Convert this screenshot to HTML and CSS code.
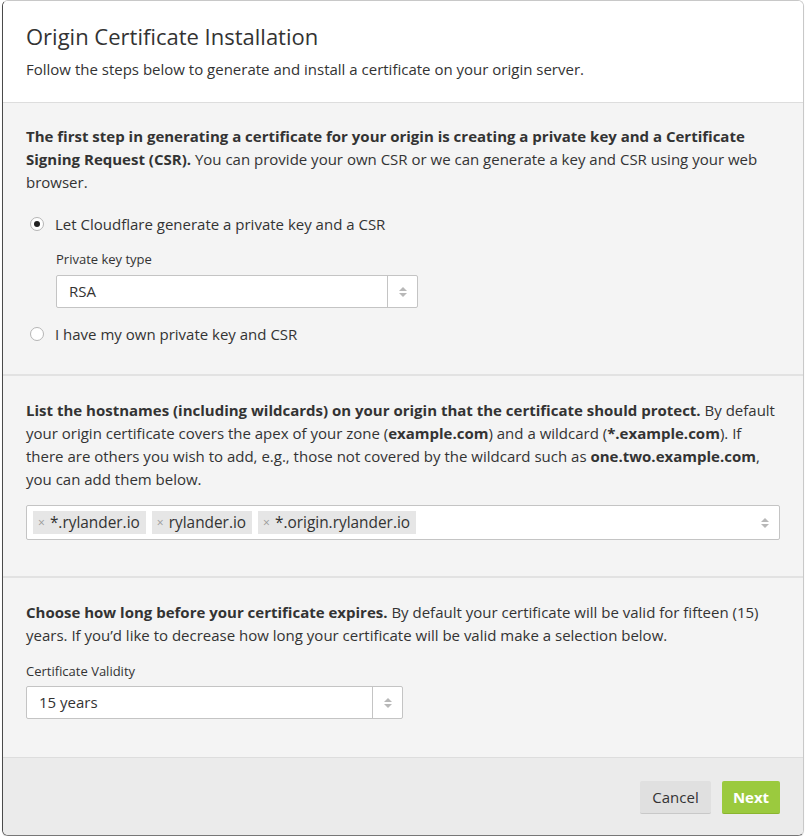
FILE: index.html
```html
<!DOCTYPE html>
<html>
<head>
<meta charset="utf-8">
<link rel="stylesheet" href="styles.css">
</head>
<body>
<div class="modal">
  <div class="header">
    <h1 class="title">Origin Certificate Installation</h1>
    <p class="subtitle">Follow the steps below to generate and install a certificate on your origin server.</p>
  </div>
  <div class="section s1">
    <p class="text"><b>The first step in generating a certificate for your origin is creating a private key and a Certificate Signing Request (CSR).</b> You can provide your own CSR or we can generate a key and CSR using your web browser.</p>
    <div class="radio-row first">
      <span class="radio checked"></span>
      <span>Let Cloudflare generate a private key and a CSR</span>
    </div>
    <div class="sub">
      <div class="label">Private key type</div>
      <div class="select w-rsa">
        <span class="select-value">RSA</span>
        <span class="select-arrow"><span class="up"></span><span class="down"></span></span>
      </div>
    </div>
    <div class="radio-row second">
      <span class="radio"></span>
      <span>I have my own private key and CSR</span>
    </div>
  </div>
  <div class="section s2">
    <p class="text"><b>List the hostnames (including wildcards) on your origin that the certificate should protect.</b> By default your origin certificate covers the apex of your zone (<b>example.com</b>) and a wildcard (<b>*.example.com</b>). If there are others you wish to add, e.g., those not covered by the wildcard such as <b>one.two.example.com</b>, you can add them below.</p>
    <div class="tags">
      <span class="tag"><span class="x">×</span>*.rylander.io</span>
      <span class="tag"><span class="x">×</span>rylander.io</span>
      <span class="tag"><span class="x">×</span>*.origin.rylander.io</span>
      <span class="tags-arrow"><span class="up"></span><span class="down"></span></span>
    </div>
  </div>
  <div class="section s3">
    <p class="text"><b>Choose how long before your certificate expires.</b> By default your certificate will be valid for fifteen (15) years. If you’d like to decrease how long your certificate will be valid make a selection below.</p>
    <div class="label">Certificate Validity</div>
    <div class="select w-valid">
      <span class="select-value">15 years</span>
      <span class="select-arrow"><span class="up"></span><span class="down"></span></span>
    </div>
  </div>
  <div class="footer">
    <button class="btn cancel">Cancel</button>
    <button class="btn next">Next</button>
  </div>
</div>
</body>
</html>
```
FILE: styles.css
```css
* { box-sizing: border-box; }
html, body { margin: 0; padding: 0; background: #fff; }
body {
  font-family: "Open Sans", "DejaVu Sans", sans-serif;
  color: #333;
}
.modal {
  margin-left: 2px;
  width: 802px;
  height: 836px;
  border: 1px solid #c8c8c8;
  border-left-color: #4a4a4a;
  border-bottom-color: #777;
  border-radius: 6px;
  overflow: hidden;
  display: flex;
  flex-direction: column;
  box-shadow: 0 1px 1px rgba(0,0,0,0.15);
}
.header {
  background: #fff;
  padding: 19px 23px 0;
  height: 102px;
  border-bottom: 1px solid #ddd;
}
.title {
  margin: 0;
  font-size: 22px;
  font-weight: 400;
  line-height: 32px;
  color: #333;
}
.subtitle {
  margin: 7px 0 0;
  font-size: 15px;
  line-height: 21px;
  color: #333;
}
.section {
  background: #f4f4f4;
  padding: 0 23px;
  border-bottom: 2px solid #e2e2e2;
}
.s1 { padding-top: 22px; height: 273px; }
.s2 { padding-top: 23px; height: 202px; }
.s3 { padding-top: 23px; height: 180px; border-bottom: 1px solid #ddd; }
.text {
  margin: 0;
  font-size: 15px;
  line-height: 23px;
}
.text b { font-weight: 700; }
.radio-row {
  display: flex;
  align-items: center;
  gap: 11px;
  font-size: 15px;
  line-height: 22px;
  padding-left: 4px;
}
.radio-row.first { margin-top: 19px; }
.radio-row.second { margin-top: 15px; }
.radio {
  width: 14px;
  height: 14px;
  border-radius: 50%;
  border: 1px solid #b5b5b5;
  background: #fff;
  display: inline-flex;
  align-items: center;
  justify-content: center;
  flex: none;
}
.radio.checked::after {
  content: "";
  width: 6px;
  height: 6px;
  border-radius: 50%;
  background: #222;
}
.sub { padding-left: 30px; margin-top: 15px; }
.label {
  font-size: 13px;
  line-height: 18px;
  color: #333;
  margin-bottom: 7px;
}
.s3 .label { margin-top: 15px; margin-bottom: 6px; }
.select {
  height: 33px;
  background: #fff;
  border: 1px solid #c4c4c4;
  border-radius: 2px;
  display: flex;
  align-items: stretch;
}
.w-rsa { width: 362px; }
.w-valid { width: 377px; }
.select-value {
  flex: 1;
  padding-left: 12px;
  font-size: 15px;
  line-height: 31px;
}
.select-arrow {
  width: 30px;
  border-left: 1px solid #c4c4c4;
  display: flex;
  flex-direction: column;
  align-items: center;
  justify-content: center;
  gap: 2px;
}
.up, .down {
  width: 0; height: 0;
  border-left: 4px solid transparent;
  border-right: 4px solid transparent;
}
.up { border-bottom: 4px solid #b8b8b8; }
.down { border-top: 4px solid #b8b8b8; }
.tags {
  margin-top: 14px;
  height: 35px;
  background: #fff;
  border: 1px solid #c4c4c4;
  border-radius: 2px;
  display: flex;
  align-items: center;
  gap: 6px;
  padding: 0 6px;
}
.tag {
  background: #e6e6e6;
  height: 23px;
  line-height: 23px;
  padding: 0 6px 0 5px;
  font-size: 15.4px;
  color: #333;
  display: inline-flex;
  align-items: center;
}
.tag .x {
  color: #999;
  font-size: 12px;
  margin-right: 5px;
}
.tags-arrow {
  margin-left: auto;
  display: flex;
  flex-direction: column;
  align-items: center;
  gap: 2px;
  margin-right: 4px;
}
.footer {
  flex: 1;
  background: #ebebeb;
  display: flex;
  justify-content: flex-end;
  align-items: flex-start;
  padding: 23px 23px 0;
  gap: 11px;
}
.btn {
  height: 33px;
  border: none;
  border-radius: 2px;
  font-family: "Open Sans", "DejaVu Sans", sans-serif;
  font-size: 15px;
  padding: 0;
  cursor: pointer;
}
.cancel {
  background: #e0e0e0;
  color: #333;
  border-bottom: 1px solid #c8c8c8;
  width: 71px;
}
.next {
  background: #9bca3e;
  color: #fff;
  font-weight: 700;
  border-bottom: 1px solid #8ab52f;
  width: 58px;
}
```
